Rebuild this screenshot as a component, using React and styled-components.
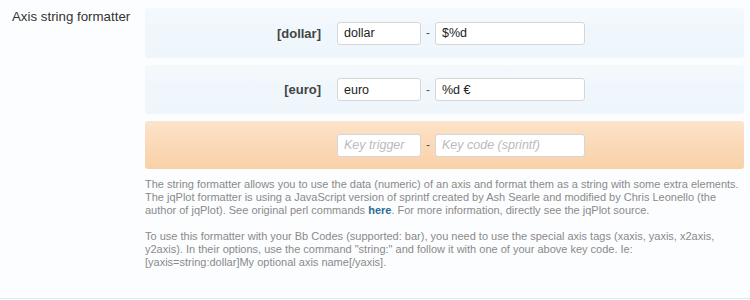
import React from 'react';
import styled, { createGlobalStyle } from 'styled-components';

const GlobalStyle = createGlobalStyle`
  body {
    margin: 0;
    background: #fcfdfe;
    font-family: "Liberation Sans", Arial, sans-serif;
  }
`;

const FormRow = styled.div`
  display: flex;
  width: 750px;
  height: 299px;
  box-sizing: border-box;
  border-bottom: 1px solid #d5eef2;
`;

const RowLabel = styled.div`
  width: 145px;
  flex-shrink: 0;
  box-sizing: border-box;
  padding: 9px 0 0 12px;
  font-size: 13.3px;
  color: #333;
`;

const Fields = styled.div`
  flex: 1;
  display: flex;
  flex-direction: column;
  padding: 8px 6px 0 0;
`;

const Panels = styled.div`
  display: flex;
  flex-direction: column;
  gap: 7px;
`;

const Panel = styled.div`
  display: flex;
  align-items: center;
  height: ${(p) => p.$h}px;
  border-radius: 3px;
  background: ${(p) =>
    p.$new
      ? 'linear-gradient(to bottom, #fce4cc 0%, #fbdcbc 35%, #f9d1a8 100%)'
      : 'linear-gradient(to bottom, #f5f9fc 0%, #f0f7fc 40%, #eef6fc 100%)'};
`;

const Trigger = styled.div`
  width: 176px;
  box-sizing: border-box;
  text-align: right;
  font-size: 13px;
  font-weight: bold;
  color: #444;
  margin-right: 16px;
`;

const Input = styled.input`
  width: ${(p) => p.$w}px;
  height: 23px;
  box-sizing: border-box;
  border: 1px solid #d6d6d6;
  border-radius: 3px;
  background: #fff;
  padding: 0 6px;
  font-family: "Liberation Sans", Arial, sans-serif;
  font-size: 12.5px;
  color: #222;
  outline: none;
  &::placeholder {
    color: #bbb;
    font-style: italic;
  }
`;

const Dash = styled.span`
  width: 14px;
  text-align: center;
  font-size: 12px;
  color: #555;
`;

const Explain = styled.div`
  margin-top: 9px;
  font-size: 11px;
  line-height: 13px;
  color: #8a8a8a;
  white-space: nowrap;
  p {
    margin: 0 0 13px;
  }
  a {
    color: #2a6f94;
    font-weight: bold;
    text-decoration: none;
  }
`;

const rows = [
  { trigger: '[dollar]', key: 'dollar', code: '$%d', h: 50 },
  { trigger: '[euro]', key: 'euro', code: '%d €', h: 49 },
];

export default function App() {
  return (
    <>
      <GlobalStyle />
      <FormRow>
        <RowLabel>Axis string formatter</RowLabel>
        <Fields>
          <Panels>
            {rows.map((r) => (
              <Panel key={r.key} $h={r.h}>
                <Trigger>{r.trigger}</Trigger>
                <Input $w={84} defaultValue={r.key} />
                <Dash>-</Dash>
                <Input $w={150} defaultValue={r.code} />
              </Panel>
            ))}
            <Panel $h={48} $new>
              <Trigger />
              <Input $w={84} placeholder="Key trigger" />
              <Dash>-</Dash>
              <Input $w={150} placeholder="Key code (sprintf)" />
            </Panel>
          </Panels>
          <Explain>
            <p>
              The string formatter allows you to use the data (numeric) of an axis and format them as a string with some extra elements.
              <br />
              The jqPlot formatter is using a JavaScript version of sprintf created by Ash Searle and modified by Chris Leonello (the
              <br />
              author of jqPlot). See original perl commands <a href="#">here</a>. For more information, directly see the jqPlot source.
            </p>
            <p>
              To use this formatter with your Bb Codes (supported: bar), you need to use the special axis tags (xaxis, yaxis, x2axis,
              <br />
              y2axis). In their options, use the command "string:" and follow it with one of your above key code. Ie:
              <br />
              [yaxis=string:dollar]My optional axis name[/yaxis].
            </p>
          </Explain>
        </Fields>
      </FormRow>
    </>
  );
}
